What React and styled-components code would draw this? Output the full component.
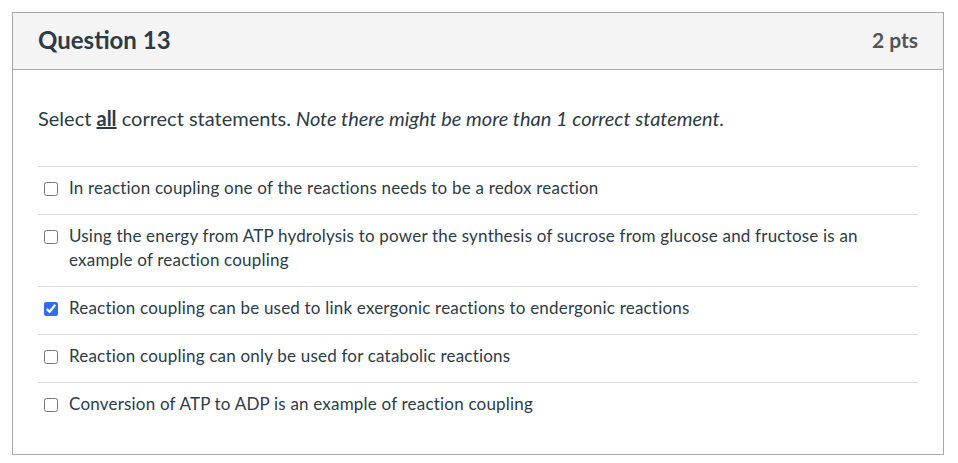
import styled, { createGlobalStyle } from "styled-components";

const GlobalStyle = createGlobalStyle`
  body {
    margin: 0;
    background: #ffffff;
    font-family: Lato, "Open Sans", sans-serif;
    color: #2d3b45;
  }
`;

const options = [
  { text: "In reaction coupling one of the reactions needs to be a redox reaction", checked: false },
  {
    text: "Using the energy from ATP hydrolysis to power the synthesis of sucrose from glucose and fructose is an example of reaction coupling",
    checked: false,
  },
  { text: "Reaction coupling can be used to link exergonic reactions to endergonic reactions", checked: true },
  { text: "Reaction coupling can only be used for catabolic reactions", checked: false },
  { text: "Conversion of ATP to ADP is an example of reaction coupling", checked: false },
];

const App = () => {
  return (
    <Page>
      <GlobalStyle />
      <Card>
        <Header>
          <Title>Question 13</Title>
          <Points>2 pts</Points>
        </Header>
        <Body>
          <Prompt>
            Select <u><b>all</b></u> correct statements. <i>Note there might be more than 1 correct statement.</i>
          </Prompt>
          <Answers>
            {options.map((o, i) => (
              <Answer key={i}>
                <Check type="checkbox" checked={o.checked} readOnly />
                <Label>{o.text}</Label>
              </Answer>
            ))}
          </Answers>
        </Body>
      </Card>
    </Page>
  );
};
export default App;

const Page = styled.div`
  padding: 12px 14px 8px 12px;
`;
const Card = styled.div`
  border: 1px solid #a9a9a9;
  width: 932px;
  box-sizing: border-box;
`;
const Header = styled.div`
  display: flex;
  justify-content: space-between;
  align-items: center;
  height: 57px;
  box-sizing: border-box;
  padding: 0 25px 4px 25px;
  background: #f4f4f4;
  border-bottom: 1px solid #a9a9a9;
`;
const Title = styled.div`
  font-size: 24px;
  font-weight: 700;
  color: #2d3b45;
`;
const Points = styled.div`
  font-size: 21px;
  font-weight: 700;
  color: #555;
`;
const Body = styled.div`
  padding: 36px 25px 24px 25px;
`;
const Prompt = styled.div`
  font-size: 20px;
  line-height: 24px;
  margin-bottom: 36px;
  b {
    font-weight: 700;
  }
`;
const Answers = styled.div`
  display: flex;
  flex-direction: column;
`;
const Answer = styled.div`
  display: flex;
  align-items: flex-start;
  gap: 11px;
  padding: 9px 0 14px 6px;
  border-top: 1px solid #dcdcdc;
`;
const Check = styled.input`
  width: 14px;
  height: 14px;
  margin: 6px 0 0 0;
  flex: none;
  accent-color: #2f6fed;
`;
const Label = styled.div`
  font-size: 17px;
  letter-spacing: 0.2px;
  line-height: 24px;
  color: #2d3b45;
`;
